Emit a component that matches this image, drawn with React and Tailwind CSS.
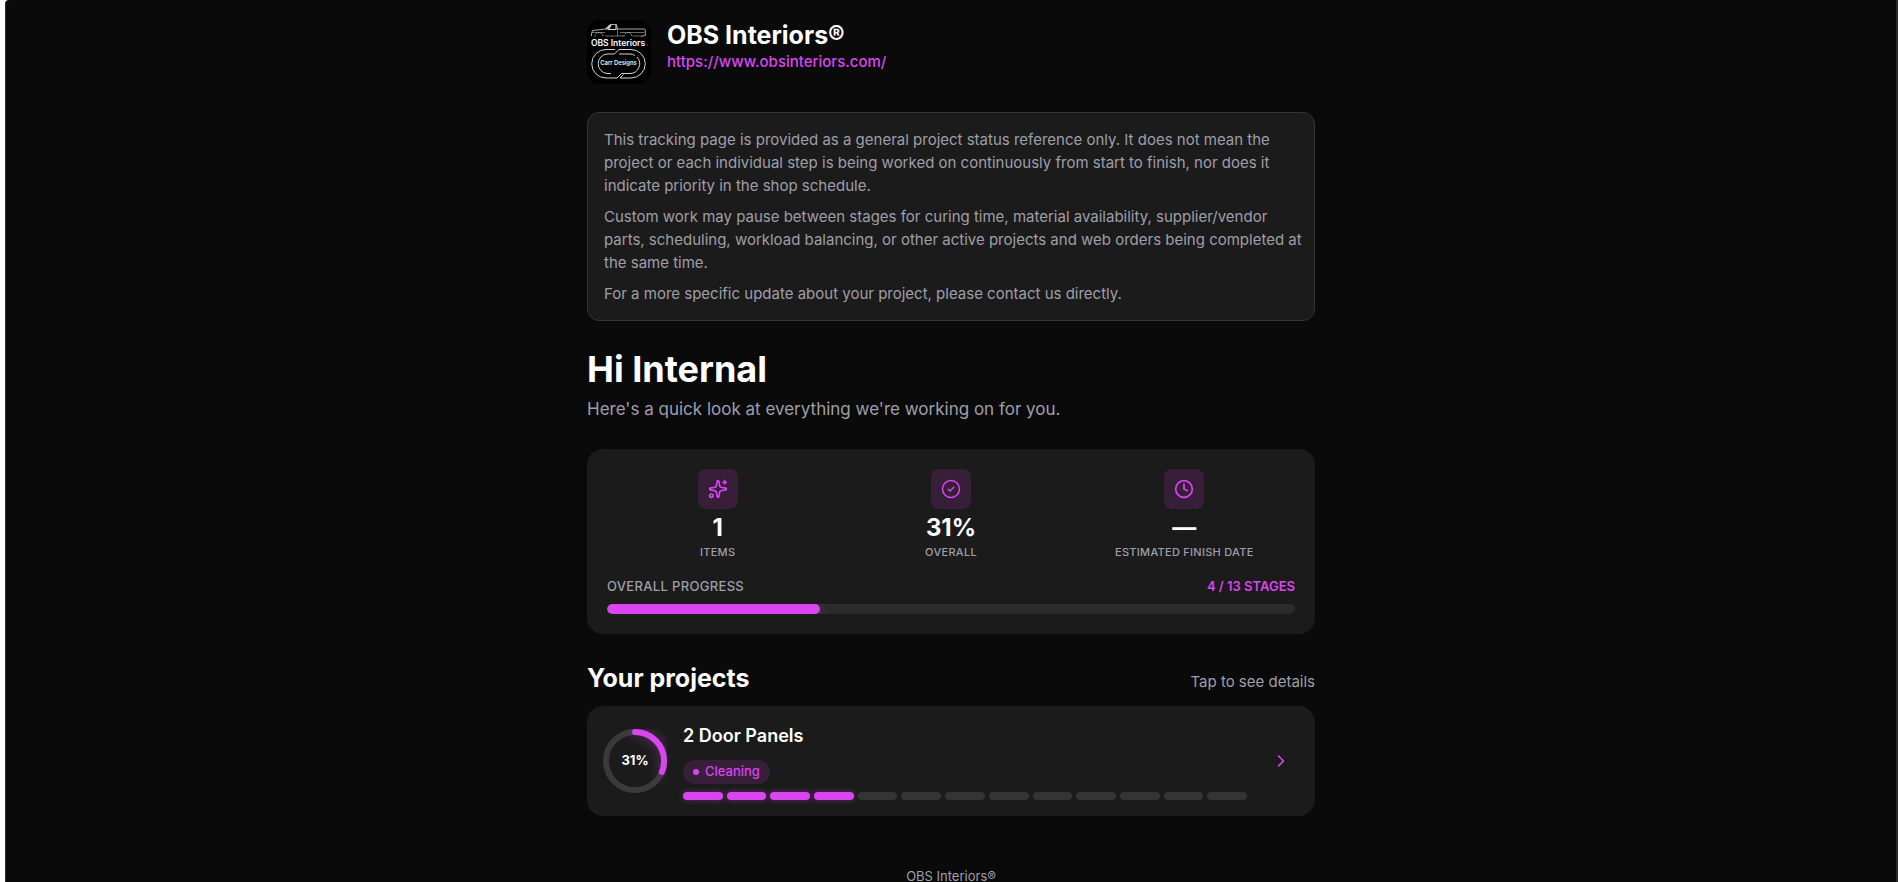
import { Sparkles, Clock, ChevronRight } from 'lucide-react';

const NOTICE = [
  'This tracking page is provided as a general project status reference only. It does not mean the project or each individual step is being worked on continuously from start to finish, nor does it indicate priority in the shop schedule.',
  'Custom work may pause between stages for curing time, material availability, supplier/vendor parts, scheduling, workload balancing, or other active projects and web orders being completed at the same time.',
  'For a more specific update about your project, please contact us directly.',
];

const PROJECTS = [{ name: '2 Door Panels', stage: 'Cleaning', done: 4, total: 13 }];

const percentOf = (done, total) => Math.round((done / total) * 100);

function BrandLogo() {
  return (
    <svg viewBox="0 0 64 64" className="size-16 shrink-0 rounded-xl bg-black" role="img" aria-label="OBS Interiors logo">
      {/* Truck */}
      <g fill="none" stroke="#d4d4d4" strokeWidth=".8">
        <path d="M4.500 16v-2.500l1-3 13-1.500 4.500-4.500h6.500l1 4.500h27l.8 1v5.500l-4 .8" />
        <path d="M19 9.500l4.500-4.500M24 5l-2.500 4.500h7.500V5" strokeWidth="1.200" />
        <path d="M5 12.500h13M30.500 9v7M18 16h19M46 16h9M33 12.500h24" strokeWidth=".5" />
        <path d="M8 16.500a4 4 0 0 1 8 0M37 16.500a4 4 0 0 1 8 0" strokeDasharray="1.500 1" />
      </g>
      {/* Track */}
      <g fill="none" stroke="#d4d4d4" strokeWidth="1">
        <path d="M32 29.500l-4.500 4.500H20a9.800 9.800 0 0 0 0 19.500h4" />
        <path d="M28 29.500h-9a14.200 14.200 0 0 0 0 28.500h11l4.500-4.500H43a9.800 9.800 0 0 0 7-16.500" />
        <path d="M32 29.500h12a14.200 14.200 0 0 1 0 28.500H33l3.500-3.500" />
        <path d="M32 34h11a9.800 9.800 0 0 1 5 1.500" />
      </g>
      <text x="31" y="25.500" textAnchor="middle" fontSize="8.500" fontWeight="600" fill="#fff">OBS Interiors</text>
      <text x="31.500" y="45" textAnchor="middle" fontSize="5.800" fontWeight="600" fill="#f5f5f5">Carr Designs</text>
      <circle cx="60.500" cy="25" r=".5" fill="#888" />
    </svg>
  );
}

function CheckBadgeIcon() {
  return (
    <svg viewBox="0 0 20 20" className="size-5" fill="none" stroke="currentColor" strokeWidth="1.500" strokeLinecap="round" strokeLinejoin="round">
      <circle cx="10" cy="10" r="8.500" />
      <path d="M7.300 10.400l1.900 1.600 3.500-3.700" />
    </svg>
  );
}

function Stat({ icon, value, label }) {
  return (
    <div className="flex flex-col items-center text-center">
      <div className="flex size-10 items-center justify-center rounded-lg bg-[#371f3a] text-[#d946ef]">{icon}</div>
      <p className="mt-1 text-2xl leading-[30px] font-bold">{value}</p>
      <p className="mt-px text-[11px] leading-4 font-medium tracking-wide text-[#9f9fa9] uppercase">{label}</p>
    </div>
  );
}

function ProgressRing({ percent }) {
  const r = 29;
  const length = 2 * Math.PI * r;
  return (
    <div className="relative size-16 shrink-0">
      <svg viewBox="0 0 64 64" className="size-16 -rotate-90" fill="none" strokeWidth="6">
        <circle cx="32" cy="32" r={r} stroke="#3a3a3c" />
        <circle
          cx="32"
          cy="32"
          r={r}
          stroke="#d946ef"
          strokeLinecap="round"
          strokeDasharray={length}
          strokeDashoffset={length * (1 - percent / 100)}
          className="drop-shadow-[0_0_6px_rgba(217,70,239,0.45)]"
        />
      </svg>
      <span className="absolute inset-0 flex items-center justify-center text-[13px] font-bold">{percent}%</span>
    </div>
  );
}

function ProjectCard({ project }) {
  return (
    <button type="button" className="mt-3 flex w-full items-center gap-4 rounded-2xl bg-[#1b1b1b] p-4 text-left">
      <ProgressRing percent={percentOf(project.done, project.total)} />
      <div className="flex min-w-0 flex-1 flex-col items-start">
        <p className="text-lg leading-7 font-semibold">{project.name}</p>
        <span className="mt-[10px] flex h-6 items-center gap-[6px] rounded-full bg-[#371f3a] px-[10px] text-[13px] font-medium text-[#d946ef]">
          <span className="size-[6px] rounded-full bg-[#d946ef]" />
          {project.stage}
        </span>
        <div className="mt-2 flex w-full gap-1">
          {Array.from({ length: project.total }, (_, i) => (
            <span
              key={i}
              className={
                i < project.done
                  ? 'h-2 flex-1 rounded-full bg-[#d946ef] shadow-[0_0_6px_rgba(217,70,239,0.4)]'
                  : 'h-2 flex-1 rounded-full bg-[#343436]'
              }
            />
          ))}
        </div>
      </div>
      <span className="flex w-9 shrink-0 justify-center text-[#d946ef]">
        <ChevronRight size={20} strokeWidth={2} />
      </span>
    </button>
  );
}

export default function App() {
  const done = PROJECTS.reduce((sum, p) => sum + p.done, 0);
  const total = PROJECTS.reduce((sum, p) => sum + p.total, 0);
  const percent = percentOf(done, total);

  return (
    <div className="min-h-screen bg-white pl-[5px] font-[Inter,sans-serif] text-white">
      <div className="min-h-screen rounded-tl border-r-2 border-l border-r-[#2b2b2b] border-l-[#2b2b2b] bg-[#0a0a0a]">
        <main className="mx-auto max-w-[760px] px-4 pt-5">
          {/* Brand */}
          <header className="flex items-start gap-4">
            <BrandLogo />
            <div>
              <p className="text-[25px] leading-[30px] font-bold">OBS Interiors®</p>
              <a href="https://www.obsinteriors.com/" className="block text-[15px] leading-6 font-medium text-[#d946ef]">
                https://www.obsinteriors.com/
              </a>
            </div>
          </header>

          {/* Notice */}
          <section className="mt-7 flex flex-col gap-2 rounded-xl border border-[#343436] bg-[#1b1b1b] py-[15px] pr-2 pl-4 text-[15px] leading-[23px] text-[#9f9fa9]">
            {NOTICE.map((text) => (
              <p key={text}>{text}</p>
            ))}
          </section>

          <h1 className="mt-7 text-4xl leading-10 font-bold">Hi Internal</h1>
          <p className="mt-2 text-[17px] leading-6 text-[#9f9fa9]">Here's a quick look at everything we're working on for you.</p>

          {/* Stats */}
          <section className="mt-7 rounded-2xl bg-[#1b1b1b] p-5">
            <div className="grid grid-cols-3 gap-3">
              <Stat icon={<Sparkles size={20} strokeWidth={2} />} value={PROJECTS.length} label="Items" />
              <Stat icon={<CheckBadgeIcon />} value={`${percent}%`} label="Overall" />
              <Stat icon={<Clock size={20} strokeWidth={2} />} value="—" label="Estimated finish date" />
            </div>
            <div className="mt-4 flex items-center justify-between text-[13px] leading-5 font-medium uppercase">
              <span className="tracking-wide text-[#9f9fa9]">Overall progress</span>
              <span className="font-semibold text-[#d946ef]">{done} / {total} stages</span>
            </div>
            <div className="mt-2 h-[10px] overflow-hidden rounded-full bg-[#2b2b2b]">
              <div
                className="h-full rounded-full bg-[#d946ef] shadow-[0_0_12px_rgba(217,70,239,0.4)]"
                style={{ width: `${percent}%` }}
              />
            </div>
          </section>

          {/* Projects */}
          <div className="mt-7 flex items-baseline justify-between">
            <h2 className="text-[25px] leading-8 font-bold">Your projects</h2>
            <span className="text-[15px] text-[#9f9fa9]">Tap to see details</span>
          </div>
          {PROJECTS.map((project) => (
            <ProjectCard key={project.name} project={project} />
          ))}

          <footer className="mt-[50px] text-center text-[13px] leading-5 text-[#9f9fa9]">OBS Interiors®</footer>
        </main>
      </div>
    </div>
  );
}
